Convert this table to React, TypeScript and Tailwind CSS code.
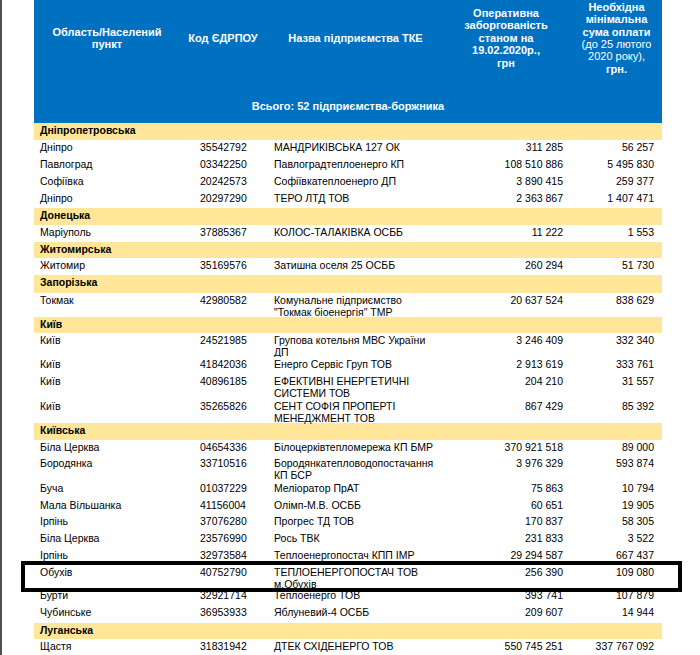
import React from 'react';

type Entry =
  | { region: string }
  | { city: string; code: string; name: string[]; debt: string; min: string; h: string; boxed?: boolean };

const rows: Entry[] = [
  { region: 'Дніпропетровська' },
  { city: 'Дніпро', code: '35542792', name: ['МАНДРИКІВСЬКА 127 ОК'], debt: '311 285', min: '56 257', h: 'h-[17px]' },
  { city: 'Павлоград', code: '03342250', name: ['Павлоградтеплоенерго КП'], debt: '108 510 886', min: '5 495 830', h: 'h-[17px]' },
  { city: 'Софіївка', code: '20242573', name: ['Софіївкатеплоенерго ДП'], debt: '3 890 415', min: '259 377', h: 'h-[17px]' },
  { city: 'Дніпро', code: '20297290', name: ['ТЕРО ЛТД ТОВ'], debt: '2 363 867', min: '1 407 471', h: 'h-[17px]' },
  { region: 'Донецька' },
  { city: 'Маріуполь', code: '37885367', name: ['КОЛОС-ТАЛАКІВКА ОСББ'], debt: '11 222', min: '1 553', h: 'h-[17px]' },
  { region: 'Житомирська' },
  { city: 'Житомир', code: '35169576', name: ['Затишна оселя 25 ОСББ'], debt: '260 294', min: '51 730', h: 'h-[17px]' },
  { region: 'Запорізька' },
  { city: 'Токмак', code: '42980582', name: ['Комунальне підприємство', '"Токмак біоенергія" ТМР'], debt: '20 637 524', min: '838 629', h: 'h-[24px]' },
  { region: 'Київ' },
  { city: 'Київ', code: '24521985', name: ['Групова котельня МВС України', 'ДП'], debt: '3 246 409', min: '332 340', h: 'h-[24px]' },
  { city: 'Київ', code: '41842036', name: ['Енерго Сервіс Груп ТОВ'], debt: '2 913 619', min: '333 761', h: 'h-[17px]' },
  { city: 'Київ', code: '40896185', name: ['ЕФЕКТИВНІ ЕНЕРГЕТИЧНІ', 'СИСТЕМИ ТОВ'], debt: '204 210', min: '31 557', h: 'h-[25px]' },
  { city: 'Київ', code: '35265826', name: ['СЕНТ СОФІЯ ПРОПЕРТІ', 'МЕНЕДЖМЕНТ ТОВ'], debt: '867 429', min: '85 392', h: 'h-[24px]' },
  { region: 'Київська' },
  { city: 'Біла Церква', code: '04654336', name: ['Білоцерківтепломережа КП БМР'], debt: '370 921 518', min: '89 000', h: 'h-[16px]' },
  { city: 'Бородянка', code: '33710516', name: ['Бородянкатепловодопостачання', 'КП БСР'], debt: '3 976 329', min: '593 874', h: 'h-[25px]' },
  { city: 'Буча', code: '01037229', name: ['Меліоратор ПрАТ'], debt: '75 863', min: '10 794', h: 'h-[17px]' },
  { city: 'Мала Вільшанка', code: '41156004', name: ['Олімп-М.В. ОСББ'], debt: '60 651', min: '19 905', h: 'h-[16px]' },
  { city: 'Ірпінь', code: '37076280', name: ['Прогрес ТД ТОВ'], debt: '170 837', min: '58 305', h: 'h-[17px]' },
  { city: 'Біла Церква', code: '23576990', name: ['Рось ТВК'], debt: '231 833', min: '3 522', h: 'h-[17px]' },
  { city: 'Ірпінь', code: '32973584', name: ['Теплоенергопостач КПП ІМР'], debt: '29 294 587', min: '667 437', h: 'h-[17px]' },
  { city: 'Обухів', code: '40752790', name: ['ТЕПЛОЕНЕРГОПОСТАЧ ТОВ', 'м.Обухів'], debt: '256 390', min: '109 080', h: 'h-[23px]', boxed: true },
  { city: 'Бурти', code: '32921714', name: ['Теплоенерго ТОВ'], debt: '393 741', min: '107 879', h: 'h-[17px]' },
  { city: 'Чубинське', code: '36953933', name: ['Яблуневий-4 ОСББ'], debt: '209 607', min: '14 944', h: 'h-[18px]' },
  { region: 'Луганська' },
  { city: 'Щастя', code: '31831942', name: ['ДТЕК СХІДЕНЕРГО ТОВ'], debt: '550 745 251', min: '337 767 092', h: 'h-[17px]' },
];

const regionHeights: Record<string, string> = {
  'Дніпропетровська': 'h-[17px]',
  'Донецька': 'h-[17px]',
  'Житомирська': 'h-[16px]',
  'Запорізька': 'h-[18px]',
  'Київ': 'h-[16px]',
  'Київська': 'h-[17px]',
  'Луганська': 'h-[16px]',
};

const cols = 'grid grid-cols-[166px_74px_171px_122px_95px]';

export default function App() {
  return (
    <div className="flex w-[700px] h-[655px] overflow-hidden bg-white font-['Liberation_Sans',Arial,sans-serif] text-black">
      <div className="w-[2px] shrink-0 bg-[#505050]" />
      <div className="ml-[32px] w-[628px] shrink-0">
        {/* header */}
        <div className="h-[123px] bg-[#0070c0] text-white text-[11px] font-bold leading-[12.4px]">
          <div className="grid h-[76px] grid-cols-[146px_86px_179px_122px_95px] items-center text-center">
            <div>Область/Населений<br />пункт</div>
            <div>Код ЄДРПОУ</div>
            <div>Назва підприємства ТКЕ</div>
            <div>Оперативна<br />заборгованість<br />станом на<br />19.02.2020р.,<br />грн</div>
            <div className="pl-[4px]">
              Необхідна<br />мінімальна<br />сума оплати<br />
              <span className="font-normal">(до 25 лютого<br />2020 року),</span><br />грн.
            </div>
          </div>
          <div className="pt-[24px] text-center">Всього: 52 підприємства-боржника</div>
        </div>

        {/* body */}
        <div className="text-[10.5px] leading-[12px]">
          {rows.map((r, i) =>
            'region' in r ? (
              <div key={i} className={`${regionHeights[r.region]} bg-[#ffe699] pl-[6px] pt-[1px] font-bold`}>
                {r.region}
              </div>
            ) : (
              <div key={i} className={`${cols} ${r.h} relative bg-white pt-[1px]`}>
                <div className="pl-[6px]">{r.city}</div>
                <div>{r.code}</div>
                <div>
                  {r.name.map((n, j) => (
                    <div key={j}>{n}</div>
                  ))}
                </div>
                <div className="pr-[4px] text-right">{r.debt}</div>
                <div className="pr-[8px] text-right">{r.min}</div>
                {r.boxed && (
                  <div className="pointer-events-none absolute -left-[13px] -right-[20px] -top-[4px] -bottom-[4px] z-10 border-[4px] border-black" />
                )}
              </div>
            )
          )}
        </div>
      </div>
    </div>
  );
}
